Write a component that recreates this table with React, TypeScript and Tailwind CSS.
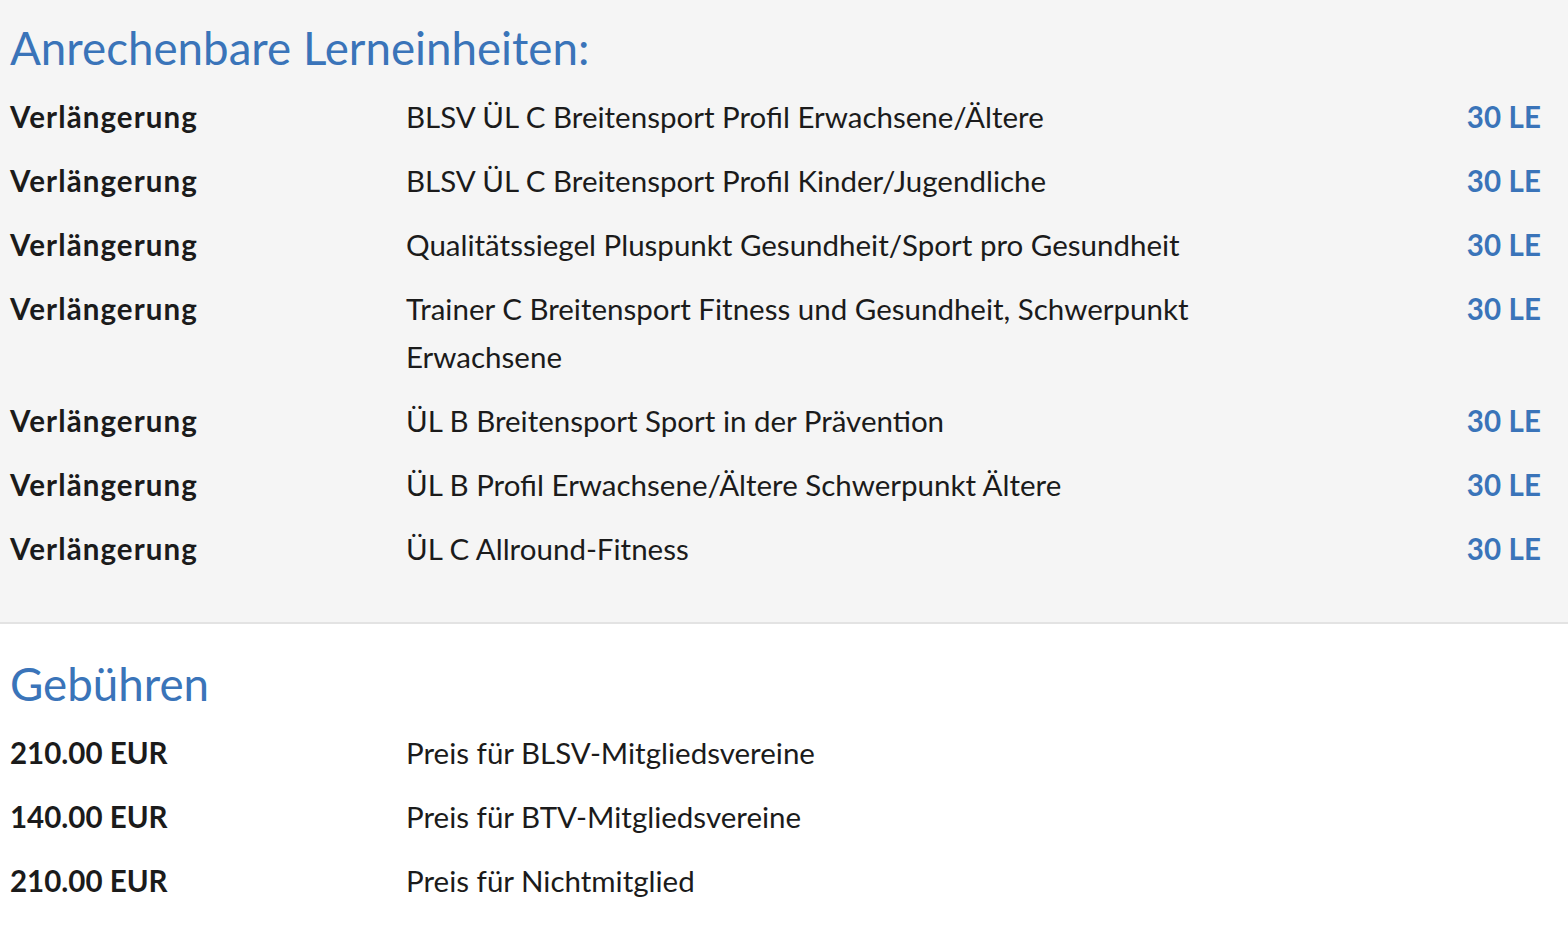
const units = [
  "BLSV ÜL C Breitensport Profil Erwachsene/Ältere",
  "BLSV ÜL C Breitensport Profil Kinder/Jugendliche",
  "Qualitätssiegel Pluspunkt Gesundheit/Sport pro Gesundheit",
  "Trainer C Breitensport Fitness und Gesundheit, Schwerpunkt Erwachsene",
  "ÜL B Breitensport Sport in der Prävention",
  "ÜL B Profil Erwachsene/Ältere Schwerpunkt Ältere",
  "ÜL C Allround-Fitness",
];

const fees = [
  { price: "210.00 EUR", label: "Preis für BLSV-Mitgliedsvereine" },
  { price: "140.00 EUR", label: "Preis für BTV-Mitgliedsvereine" },
  { price: "210.00 EUR", label: "Preis für Nichtmitglied" },
];

export default function App() {
  return (
    <div
      className="min-h-screen bg-white text-[#1b1b1b]"
      style={{ fontFamily: "Lato, 'Noto Sans', sans-serif" }}
    >
      {/* LERNEINHEITEN */}
      <section className="bg-[#f5f5f5] border-b-2 border-[#e3e3e3] pl-[10px] pr-[27px] pt-[20px] pb-[33px]">
        <h2 className="text-[45.7px] leading-[56px] font-normal text-[#3a74b9] mb-[17px]">
          Anrechenbare Lerneinheiten:
        </h2>
        {units.map((u, i) => (
          <div key={i} className="flex text-[29.5px] leading-[48px] mb-[16px]">
            <div className="w-[396px] shrink-0 font-bold tracking-[1.1px]">Verlängerung</div>
            <div className="w-[830px] shrink-0">{u}</div>
            <div className="flex-1 text-right font-bold tracking-[0.1px] text-[#3a74b9]">30 LE</div>
          </div>
        ))}
      </section>

      {/* GEBÜHREN */}
      <section className="pl-[10px] pr-[27px] pt-[32px] pb-[20px]">
        <h2 className="text-[45.7px] leading-[56px] font-normal text-[#3a74b9] mb-[17px]">
          Gebühren
        </h2>
        {fees.map((f, i) => (
          <div key={i} className="flex text-[29.5px] leading-[48px] mb-[16px]">
            <div className="w-[396px] shrink-0 font-bold tracking-[0px]">{f.price}</div>
            <div className="flex-1">{f.label}</div>
          </div>
        ))}
      </section>
    </div>
  );
}
